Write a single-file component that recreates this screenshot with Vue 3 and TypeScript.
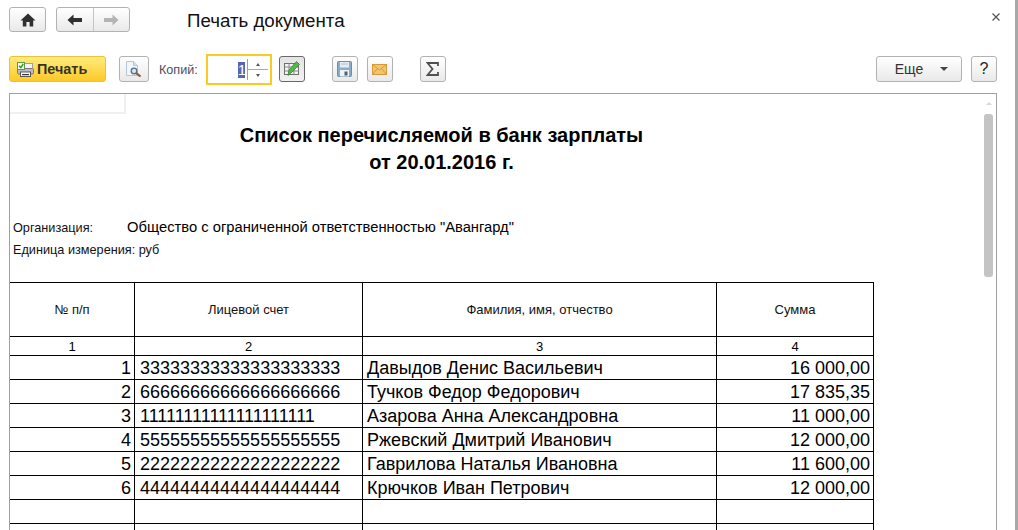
<script setup lang="ts">
// Печать документа: report print form with toolbar
interface PayRow {
  num: number
  account: string
  name: string
  sum: string
}

const rows: PayRow[] = [
  { num: 1, account: '33333333333333333333', name: 'Давыдов Денис Васильевич', sum: '16 000,00' },
  { num: 2, account: '66666666666666666666', name: 'Тучков Федор Федорович', sum: '17 835,35' },
  { num: 3, account: '11111111111111111111', name: 'Азарова Анна Александровна', sum: '11 000,00' },
  { num: 4, account: '55555555555555555555', name: 'Ржевский Дмитрий Иванович', sum: '12 000,00' },
  { num: 5, account: '22222222222222222222', name: 'Гаврилова Наталья Ивановна', sum: '11 600,00' },
  { num: 6, account: '44444444444444444444', name: 'Крючков Иван Петрович', sum: '12 000,00' },
]
</script>

<template>
  <div class="window">
    <header class="title-bar">
      <button class="btn home-btn" aria-label="Домой">
        <svg width="16" height="14" viewBox="0 0 16 14">
          <path d="M8 0.5 L15.5 7.5 H13.2 V13.5 H9.6 V9 H6.4 V13.5 H2.8 V7.5 H0.5 Z" fill="#2f2f2f" />
        </svg>
      </button>
      <div class="nav-group">
        <button class="nav-btn" aria-label="Назад">
          <svg width="16" height="12" viewBox="0 0 16 12">
            <path d="M0.5 6 L6.5 0.5 V4 H15 V8 H6.5 V11.5 Z" fill="#2f2f2f" />
          </svg>
        </button>
        <button class="nav-btn" aria-label="Вперед">
          <svg width="16" height="12" viewBox="0 0 16 12">
            <path d="M15.5 6 L9.5 0.5 V4 H1 V8 H9.5 V11.5 Z" fill="#b4b4b4" />
          </svg>
        </button>
      </div>
      <h1 class="doc-title">Печать документа</h1>
      <span class="close-mark">
        <svg width="8" height="8" viewBox="0 0 8 8">
          <path d="M0.5 0.5 L7.5 7.5 M7.5 0.5 L0.5 7.5" stroke="#555" stroke-width="1.2" fill="none" />
        </svg>
      </span>
    </header>

    <div class="toolbar">
      <button class="btn print-btn">
        <svg width="17" height="15" viewBox="0 0 17 15">
          <rect x="6.5" y="1.5" width="9" height="5" fill="#f4f4f4" stroke="#a0a0a0" />
          <rect x="0.5" y="6.5" width="16" height="5.5" rx="1.2" fill="#b9bcc0" stroke="#77797c" />
          <rect x="3.5" y="10" width="10" height="4.5" fill="#fff" stroke="#555" />
          <rect x="5" y="12" width="7" height="1.2" fill="#333" />
          <rect x="0.5" y="0.5" width="7" height="7" fill="#fff" stroke="#5f9a4a" />
          <path d="M2 3.8 L3.8 5.6 L6.2 2" stroke="#2f9a2a" stroke-width="1.5" fill="none" />
        </svg>
        <span>Печать</span>
      </button>
      <button class="btn icon-btn preview-btn" aria-label="Просмотр">
        <svg width="16" height="16" viewBox="0 0 16 16">
          <path d="M0.5 0.5 H7.5 L11.5 4.5 V14.5 H0.5 Z" fill="#f1f6fb" stroke="#b4c6d6" />
          <path d="M7.5 0.5 V4.5 H11.5" fill="#d5e2ee" stroke="#b4c6d6" />
          <circle cx="8" cy="10" r="2.8" fill="#d4e6f5" stroke="#5d6d7c" stroke-width="1.3" />
          <path d="M10.2 12.2 L14.5 15.5" stroke="#8a5a3a" stroke-width="2.2" />
        </svg>
      </button>
      <label class="copies-label">Копий:</label>
      <div class="copies-input">
        <span class="copies-value"><span class="copies-sel">1</span></span>
        <span class="spinner">
          <span class="spin-part"><i class="arrow-up"></i></span>
          <span class="spin-part spin-down"><i class="arrow-down"></i></span>
        </span>
      </div>
      <button class="btn icon-btn edit-btn" aria-label="Редактирование">
        <svg width="16" height="16" viewBox="0 0 16 16">
          <rect x="0.5" y="2.5" width="14" height="11" fill="#f3f3f3" stroke="#6e6e6e" />
          <path d="M0.5 6 H14.5 M0.5 10 H14.5 M5 2.5 V13.5 M10 2.5 V13.5" stroke="#8a8a8a" fill="none" />
          <path d="M12.5 0.5 L15.5 3.5 L8 11 L4 14.5 L5 9 Z" fill="#56b84a" stroke="#2f8a2f" stroke-width="0.8" />
        </svg>
      </button>
      <button class="btn icon-btn save-btn" aria-label="Сохранить">
        <svg width="15" height="16" viewBox="0 0 15 16">
          <rect x="0.5" y="0.5" width="14" height="15" rx="1" fill="#8eabc6" stroke="#6f8ba6" />
          <rect x="3" y="1" width="9" height="5.5" fill="#e4edf5" />
          <path d="M4 3 H11" stroke="#a9bfd3" />
          <rect x="3" y="9" width="9" height="6.5" fill="#eef3f7" />
          <rect x="7.5" y="10.5" width="3" height="4" fill="#4c6278" />
        </svg>
      </button>
      <button class="btn icon-btn mail-btn" aria-label="Отправить">
        <svg width="15" height="11" viewBox="0 0 15 11">
          <rect x="0.5" y="0.5" width="14" height="10" fill="#f3c46c" stroke="#d59a3a" />
          <path d="M0.5 0.5 L7.5 6 L14.5 0.5 M0.5 10.5 L5.5 4.5 M14.5 10.5 L9.5 4.5" stroke="#d59a3a" fill="none" />
        </svg>
      </button>
      <button class="btn icon-btn sum-btn" aria-label="Сумма">
        <svg width="13" height="14" viewBox="0 0 13 14">
          <path d="M12 4 V1 H1.5 L6.5 7 L1.5 13 H12 V10" stroke="#505050" stroke-width="1.8" fill="none" />
        </svg>
      </button>
      <div class="spacer"></div>
      <button class="btn more-btn">
        <span>Еще</span>
        <i class="more-caret"></i>
      </button>
      <button class="btn help-btn">?</button>
    </div>

    <section class="panel">
      <div class="sheet">
        <div class="corner-cell"></div>
        <div class="report-title">
          <div>Список перечисляемой в банк зарплаты</div>
          <div>от 20.01.2016 г.</div>
        </div>
        <div class="org-line">
          <span class="meta-label org-label">Организация:</span>
          <span class="org-name">Общество с ограниченной ответственностью "Авангард"</span>
        </div>
        <div class="meta-label unit-line">Единица измерения: руб</div>
        <table class="pay-table">
          <colgroup>
            <col class="col-num" />
            <col class="col-acc" />
            <col class="col-name" />
            <col class="col-sum" />
          </colgroup>
          <tr class="head-row">
            <th>№ п/п</th>
            <th>Лицевой счет</th>
            <th>Фамилия, имя, отчество</th>
            <th>Сумма</th>
          </tr>
          <tr class="index-row">
            <td>1</td>
            <td>2</td>
            <td>3</td>
            <td>4</td>
          </tr>
          <tr v-for="row in rows" :key="row.num" class="data-row">
            <td class="right">{{ row.num }}</td>
            <td class="account">{{ row.account }}</td>
            <td>{{ row.name }}</td>
            <td class="right">{{ row.sum }}</td>
          </tr>
          <tr class="data-row"><td></td><td></td><td></td><td></td></tr>
          <tr class="data-row"><td></td><td></td><td></td><td></td></tr>
        </table>
      </div>
      <aside class="scrollbar">
        <i class="scroll-up"></i>
        <div class="scroll-thumb"></div>
      </aside>
    </section>
  </div>
</template>

<style>
html,
body {
  margin: 0;
  background: #fff;
  overflow: hidden;
}
</style>

<style scoped>
.window {
  display: flex;
  flex-direction: column;
  box-sizing: border-box;
  width: 1018px;
  height: 530px;
  padding-right: 3px;
  background: #fff;
  overflow: hidden;
  font-family: 'Liberation Sans', Arial, sans-serif;
  color: #000;
  position: relative;
  border-right: 3px solid #a8a8a8;
}

.title-bar {
  display: flex;
  align-items: center;
  height: 25px;
  margin-top: 7px;
  padding-left: 9px;
}

.btn {
  display: flex;
  align-items: center;
  justify-content: center;
  box-sizing: border-box;
  padding: 0;
  border: 1px solid #b2b2b2;
  border-radius: 3px;
  background: linear-gradient(#ffffff, #e9e9e9);
  font-family: inherit;
  color: #222;
}

.home-btn {
  width: 37px;
  height: 25px;
}

.nav-group {
  display: flex;
  width: 74px;
  height: 25px;
  margin-left: 10px;
  box-sizing: border-box;
  border: 1px solid #b2b2b2;
  border-radius: 3px;
  background: linear-gradient(#ffffff, #e9e9e9);
}

.nav-btn {
  display: flex;
  flex: 1;
  align-items: center;
  justify-content: center;
  padding: 0;
  border: none;
  background: transparent;
}

.nav-btn + .nav-btn {
  border-left: 1px solid #c4c4c4;
}

.doc-title {
  margin: 2px 0 0 57px;
  font-size: 18.7px;
  font-weight: 400;
  white-space: nowrap;
  color: #111;
}

.close-mark {
  display: flex;
  margin-left: auto;
  margin-right: 12px;
  margin-top: -6px;
}

.toolbar {
  display: flex;
  align-items: flex-start;
  height: 31px;
  margin-top: 22px;
  padding-left: 9px;
}

.toolbar > .btn {
  height: 26px;
  margin-top: 2px;
}

.print-btn {
  width: 97px;
  justify-content: flex-start;
  gap: 3px;
  padding-left: 7px !important;
  border-color: #ecc13a !important;
  background: linear-gradient(#ffec7c, #fdc927) !important;
  font-size: 14.4px;
  font-weight: 700;
  color: #3a3320 !important;
}

.icon-btn {
  width: 26px;
}

.preview-btn {
  width: 30px;
  margin-left: 13px;
}

.copies-label {
  align-self: center;
  margin-left: 10px;
  font-size: 12.6px;
  color: #4c4c68;
}

.copies-input {
  display: flex;
  align-items: stretch;
  box-sizing: border-box;
  width: 66px;
  height: 31px;
  margin-left: 8px;
  border: 2px solid #fbcb25;
  background: #fff;
}

.copies-value {
  display: flex;
  flex: 1;
  align-items: center;
  justify-content: flex-end;
  padding-right: 2px;
  font-size: 15px;
}

.copies-sel {
  display: block;
  width: 7px;
  height: 16px;
  line-height: 16px;
  text-align: center;
  background: #5468b8;
  color: #fff;
}

.spinner {
  display: flex;
  flex-direction: column;
  width: 20px;
  margin: 3px 2px 3px 0;
  border-left: 1px solid #a0a0a0;
}

.spin-part {
  display: flex;
  flex: 1;
  align-items: center;
  justify-content: center;
}

.spin-down {
  border-top: 1px solid #a8a8a8;
}

.arrow-up,
.arrow-down {
  display: block;
  width: 0;
  height: 0;
  border-left: 2px solid transparent;
  border-right: 2px solid transparent;
}

.arrow-up {
  border-bottom: 3px solid #555;
}

.arrow-down {
  border-top: 3px solid #555;
}

.edit-btn {
  margin-left: 7px;
  border-color: #6a6a6a !important;
  background: linear-gradient(#e4e4e4, #f1f1f1) !important;
}

.save-btn {
  margin-left: 27px;
}

.mail-btn {
  margin-left: 9px;
}

.sum-btn {
  margin-left: 27px;
}

.spacer {
  flex: 1;
}

.more-btn {
  position: relative;
  width: 86px;
  font-size: 14px;
  color: #333 !important;
  padding-right: 20px !important;
}

.more-caret {
  position: absolute;
  right: 13px;
  top: 10px;
  width: 0;
  height: 0;
  border-left: 4px solid transparent;
  border-right: 4px solid transparent;
  border-top: 4px solid #444;
}

.help-btn {
  width: 26px;
  margin-left: 9px;
  margin-right: 15px;
  font-size: 16px;
}

.panel {
  display: flex;
  flex: 1;
  min-height: 0;
  box-sizing: border-box;
  width: 988px;
  margin-top: 8px;
  margin-left: 9px;
  border: 1px solid #a0a0a0;
  border-bottom: none;
  overflow: hidden;
}

.sheet {
  flex: 1;
  min-width: 0;
}

.corner-cell {
  box-sizing: border-box;
  width: 116px;
  height: 20px;
  border-right: 2px solid #f0f0f0;
  border-bottom: 2px solid #f0f0f0;
}

.report-title {
  width: 863px;
  margin-top: 8px;
  font-size: 20px;
  font-weight: 700;
  line-height: 27px;
  text-align: center;
}

.org-line {
  display: flex;
  align-items: baseline;
  height: 20px;
  margin-top: 43px;
  padding-left: 3px;
}

.meta-label {
  font-size: 12.7px;
  color: #111;
}

.org-name {
  margin-left: 34px;
  font-size: 14.75px;
}

.unit-line {
  height: 20px;
  margin-top: 4px;
  padding-left: 3px;
}

.pay-table {
  width: 864px;
  margin-top: 19px;
  table-layout: fixed;
  border-collapse: separate;
  border-spacing: 0;
  border-top: 1px solid #000;
}

.col-num {
  width: 125px;
}

.col-acc {
  width: 228px;
}

.col-name {
  width: 354px;
}

.col-sum {
  width: 157px;
}

.pay-table th,
.pay-table td {
  box-sizing: border-box;
  padding: 0;
  border-right: 1px solid #000;
  border-bottom: 1px solid #000;
}

.head-row th {
  height: 54px;
  font-size: 13px;
  font-weight: 400;
  text-align: center;
  color: #111;
}

.index-row td {
  height: 19px;
  font-size: 13px;
  text-align: center;
}

.data-row td {
  height: 24px;
  padding: 1px 3px 0 4px;
  font-size: 18px;
  white-space: nowrap;
}

.data-row td.account {
  padding-left: 5px;
}

.pay-table .right {
  text-align: right;
}

.scrollbar {
  position: relative;
  width: 14px;
  margin-right: 0;
}

.scroll-up {
  position: absolute;
  top: 8px;
  left: 4px;
  width: 0;
  height: 0;
  border-left: 3px solid transparent;
  border-right: 3px solid transparent;
  border-bottom: 3px solid #d8d8d8;
}

.scroll-thumb {
  position: absolute;
  top: 20px;
  left: 2px;
  width: 9px;
  height: 163px;
  border-radius: 3px;
  background: #c4c4c4;
}
</style>
